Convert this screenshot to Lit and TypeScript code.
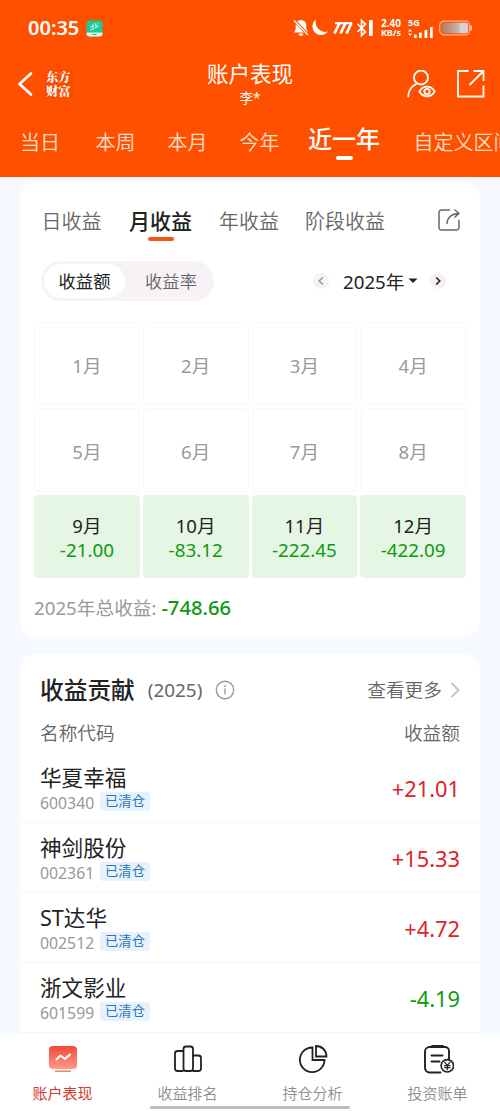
import { LitElement, html, css, svg } from "lit";
import { customElement, property, state } from "lit/decorators.js";

const fontStack = css`"Noto Sans", "Noto Sans CJK SC", sans-serif`;

@customElement("status-bar")
class StatusBar extends LitElement {
  static styles = css`
    :host { display: flex; align-items: center; height: 56px; padding: 0 28px 0 28px; color: #fff; }
    .clock { font-size: 20px; font-weight: 600; line-height: 24px; width: 52px; white-space: nowrap; }
    .app { margin-left: 6px; }
    .signs { margin-left: auto; display: flex; align-items: center; }
    svg { display: block; }
    .rate { width: 24px; margin-left: 5px; font-size: 10px; font-weight: 700; line-height: 9.5px; text-align: center; white-space: nowrap; }
    .rate div:last-child { font-size: 9px; }
    .net { margin-left: 5px; width: 26px; }
    .gen { font-size: 9px; font-weight: 700; line-height: 9px; }
    .batt { margin-left: 5px; }
  `;
  render() {
    return html`
      <span class="clock">00:35</span>
      <svg class="app" width="17" height="17" viewBox="0 0 17 17">
        <rect x=".5" y=".5" width="16" height="16" rx="3" fill="#20c997"/>
        <path d="M.5 12.500h16v1a3 3 0 0 1-3 3h-10a3 3 0 0 1-3-3z" fill="#d9f3e4"/>
        <path d="M4 10c4 0 6-3 8-7M4 7l3-1M6 4l2 1.500M9 8l4-2M6 9l2-4M9 3l1 3" stroke="#b9f5dc" stroke-width="1" fill="none"/>
        <path d="M6.500 14.500h4" stroke="#4aa98c" stroke-width="1"/>
      </svg>
      <div class="signs">
        <svg width="82" height="20" viewBox="0 0 82 20" fill="#fff">
          <path d="M9 2a5.300 5.300 0 0 0-5.300 5.300v4L2 14.500h14l-1.700-3.200v-4A5.300 5.300 0 0 0 9 2zM6.500 15.500h5a2.500 2.500 0 0 1-5 0z"/>
          <path d="M2 2l14 15" stroke="#ff5000" stroke-width="3"/>
          <path d="M2 2.500l14 14.500" stroke="#fff" stroke-width="1.300"/>
          <path d="M24 1.500a8.600 8.600 0 1 0 12 12 9.600 9.600 0 0 1-12-12z"/>
          <g stroke="#fff" stroke-width="2.800" fill="none">
            <path d="M43 5.200h17" stroke-width="2.200"/>
            <path d="M47.500 5L42.500 15.500M53.500 5L48.500 15.500M59.500 5L54.500 15.500"/>
          </g>
          <path d="M65.500 6l8 8-4 3.500v-15l4 3.500-8 8" fill="none" stroke="#fff" stroke-width="1.700"/>
          <rect x="77" y="2" width="3.800" height="16" rx="1"/>
        </svg>
        <div class="rate"><div>2.40</div><div>KB/s</div></div>
        <div class="net">
          <div class="gen">5G</div>
          <svg width="26" height="11" viewBox="0 0 26 11" fill="#fff">
            <path d="M0 4.500l2-2.500 2 2.500zM0 6.500l2 2.500 2-2.500z"/>
            <rect x="6" y="7.500" width="2.800" height="3.500" rx=".6"/>
            <rect x="11" y="5.500" width="2.800" height="5.500" rx=".6"/>
            <rect x="16.500" y="3" width="2.800" height="8" rx=".6"/>
            <rect x="22" y="0" width="2.800" height="11" rx=".6"/>
          </svg>
        </div>
        <svg class="batt" width="33" height="16" viewBox="0 0 33 16">
          <defs><linearGradient id="b"><stop offset="0" stop-color="#b5785c"/><stop offset=".65" stop-color="#c9b3aa"/><stop offset=".7" stop-color="#d7d2d2"/><stop offset="1" stop-color="#d7d2d2"/></linearGradient></defs>
          <rect x=".7" y="1.200" width="30" height="13.600" rx="4" fill="none" stroke="#ffb08a" stroke-width="1.200"/>
          <rect x="2.200" y="2.700" width="27" height="10.600" rx="2.500" fill="url(#b)"/>
          <rect x="31.300" y="5.500" width="1.700" height="5" rx=".8" fill="#ffd0b8"/>
        </svg>
      </div>
    `;
  }
}

@customElement("app-header")
class AppHeader extends LitElement {
  @state() private active = 4;
  private ranges = ["当日", "本周", "本月", "今年", "近一年", "自定义区间"];
  static styles = css`
    :host { display: block; height: 177px; background: #ff5000; color: #fff; overflow: hidden; }
    .bar { display: grid; grid-template-columns: 180px 1fr 180px; height: 56px; align-items: center; }
    .left { display: flex; align-items: center; padding-left: 17px; gap: 12px; }
    .logo { font: 900 12.300px/14px "Noto Serif CJK SC", "Noto Sans CJK SC", sans-serif; width: 26px; background: #f94a02; border-radius: 4px; padding: 0 1px; }
    .title { text-align: center; font-size: 21.500px; line-height: 26px; white-space: nowrap; }
    .owner { text-align: center; font-size: 13.500px; line-height: 22px; height: 20px; }
    .right { display: flex; justify-content: flex-end; gap: 20px; padding-right: 15px; }
    svg { display: block; }
    .ranges { display: grid; grid-template-columns: 75.500px 72px 72px 68.500px 105.500px auto; padding: 2px 0 0 20px; height: 56px; align-items: center; }
    .range { font-size: 20px; line-height: 28px; white-space: nowrap; color: #ffe0cf; font-weight: 350; padding-top: 1px; }
    .on { font-size: 24px; font-weight: 500; color: #fff; width: 72px; padding: 0; }
    .on::after { content: ""; display: block; width: 17px; height: 4px; border-radius: 2px; background: #fff; margin: 3px auto 0; }
  `;
  render() {
    return html`
      <status-bar></status-bar>
      <div class="bar">
        <div class="left">
          <svg width="16" height="26" viewBox="0 0 16 26" fill="none" stroke="#fff" stroke-width="2.600" stroke-linecap="round" stroke-linejoin="round"><path d="M14 2.500L2.500 13 14 23.500"/></svg>
          <div class="logo">东方<br>财富</div>
        </div>
        <div><div class="title">账户表现</div><div class="owner">李*</div></div>
        <div class="right">
          <svg width="29" height="29" viewBox="0 0 29 29" fill="none" stroke="#fff" stroke-width="1.800" stroke-linecap="round">
            <circle cx="14" cy="7.500" r="7"/>
            <path d="M1.200 26.500C1.500 20.500 4.500 16.500 9 14"/>
            <path d="M12.300 21.500c2-3.300 4.500-4.800 7.700-4.800s5.700 1.500 7.700 4.800c-2 3.300-4.500 4.800-7.700 4.800s-5.700-1.500-7.700-4.800z"/>
            <circle cx="20" cy="21.500" r="2.700"/>
          </svg>
          <svg width="29" height="29" viewBox="0 0 29 29" fill="none" stroke="#fff" stroke-width="1.800">
            <path d="M12.500 1H2v25.500h25.500V15.500"/><path d="M17.500 1h10v10M27.500 1L13.500 15"/>
          </svg>
        </div>
      </div>
      <div class="ranges">
        ${this.ranges.map((r, i) => html`<div class="range ${i === this.active ? "on" : ""}" @click=${() => (this.active = i)}>${r}</div>`)}
      </div>
    `;
  }
}

const months: { name: string; value?: string }[] = [
  { name: "1月" }, { name: "2月" }, { name: "3月" }, { name: "4月" },
  { name: "5月" }, { name: "6月" }, { name: "7月" }, { name: "8月" },
  { name: "9月", value: "-21.00" }, { name: "10月", value: "-83.12" },
  { name: "11月", value: "-222.45" }, { name: "12月", value: "-422.09" },
];

@customElement("income-card")
class IncomeCard extends LitElement {
  static styles = css`
    :host { display: block; box-sizing: border-box; height: 455px; background: #fff; border-radius: 16px; padding: 20px 14px 0; }
    svg { display: block; }
    .tabs { display: grid; grid-template-columns: 87.500px 90px 86px 1fr 22px; height: 40px; padding: 0 6px 0 7.500px; align-items: start; }
    .tab { font-size: 20px; line-height: 40px; color: #666; white-space: nowrap; font-weight: 350; }
    .on { font-size: 21px; line-height: 38px; font-weight: 500; color: #222; width: 63px; }
    .on::after { content: ""; display: block; width: 26px; height: 4px; border-radius: 2px; background: #f4570f; margin: -3px auto 0; }
    .share { padding-top: 7px; }
    .tools { display: flex; align-items: center; justify-content: space-between; margin-top: 19px; height: 40px; padding: 0 20px 0 7px; }
    .seg { display: flex; align-items: center; background: #f6f2f6; border-radius: 20px; padding: 3px; height: 34px; width: 167px; }
    .opt { box-sizing: border-box; flex: none; width: 81px; text-align: center; font-size: 17.300px; line-height: 36px; height: 34px; border-radius: 17px; color: #666; font-weight: 350; }
    .opt + .opt { width: 86px; padding-left: 6px; }
    .sel { background: #fff; color: #222; font-weight: 400; }
    .year { display: flex; align-items: center; }
    .label { margin-left: 14px; font-size: 18.700px; line-height: 26px; color: #222; width: 63px; white-space: nowrap; padding-top: 1px; }
    .caret { margin: 0 12px 0 2px; }
    .grid { display: grid; grid-template-columns: repeat(4, 1fr); grid-auto-rows: 83.300px; gap: 3px; margin-top: 21px; }
    .cell { box-sizing: border-box; border: 1px solid #f8f8fa; border-radius: 4px; display: flex; flex-direction: column; align-items: center; justify-content: center; font-size: 18.500px; line-height: 25px; color: #999; padding-top: 3px; }
    .loss { background: #e5f6e5; border-color: #e5f6e5; color: #222; }
    .num { color: #0e9a0e; font-weight: 500; font-size: 18.700px; }
    .cell .num { font-size: 18.800px; font-weight: 450; }
    .total { margin-top: 15px; font-size: 18.700px; line-height: 28px; color: #999; white-space: nowrap; }
    .total .num { font-size: 20.200px; }
  `;
  private arrow(d: string, color: string) {
    return html`<svg width="16" height="16" viewBox="0 0 16 16" fill="none"><circle cx="8" cy="8" r="8" fill="#f7f1f5"/><path d=${d} stroke=${color} stroke-width="1.600"/></svg>`;
  }
  render() {
    return html`
      <div class="tabs">
        <div class="tab">日收益</div><div class="tab on">月收益</div><div class="tab">年收益</div><div class="tab">阶段收益</div>
        <svg class="share" width="22" height="22" viewBox="0 0 22 22" fill="none" stroke="#666" stroke-width="1.500" stroke-linecap="round" stroke-linejoin="round">
          <path d="M11.500 1H3.500A2.500 2.500 0 0 0 1 3.500v15A2.500 2.500 0 0 0 3.500 21h15a2.500 2.500 0 0 0 2.500-2.500V11.500"/>
          <path d="M9 14.500C9.500 8.500 13 4.800 21 4.500M17 1l4 3.500-4 3.500"/>
        </svg>
      </div>
      <div class="tools">
        <div class="seg"><div class="opt sel">收益额</div><div class="opt">收益率</div></div>
        <div class="year">
          ${this.arrow("M9.800 4.500L6.200 8l3.600 3.500", "#999")}
          <span class="label">2025年</span>
          <svg class="caret" width="10" height="6" viewBox="0 0 10 6"><path d="M.5.500h9L5 5z" fill="#222"/></svg>
          ${this.arrow("M6.200 4.500L9.800 8l-3.600 3.500", "#222")}
        </div>
      </div>
      <div class="grid">
        ${months.map((m) => html`<div class="cell ${m.value ? "loss" : ""}"><span>${m.name}</span>${m.value ? html`<span class="num">${m.value}</span>` : ""}</div>`)}
      </div>
      <div class="total">2025年总收益: <span class="num">-748.66</span></div>
    `;
  }
}

const stocks = [
  { name: "华夏幸福", code: "600340", value: "+21.01" },
  { name: "神剑股份", code: "002361", value: "+15.33" },
  { name: "ST达华", code: "002512", value: "+4.72" },
  { name: "浙文影业", code: "601599", value: "-4.19" },
];

@customElement("contribution-card")
class ContributionCard extends LitElement {
  static styles = css`
    :host { display: block; background: #fff; border-radius: 16px 16px 0 0; margin-top: 17px; padding-top: 18px; height: 363px; }
    svg { display: block; }
    .head, .cols, .row { display: flex; align-items: center; padding: 0 20px; }
    .head { height: 36px; color: #666; }
    .title { font-size: 23.700px; font-weight: 500; line-height: 34px; color: #222; }
    .year { font-size: 18.900px; margin: 0 10px 0 13px; line-height: 26px; width: 57px; }
    .more { margin-left: auto; margin-right: 8px; font-size: 18.700px; line-height: 26px; font-weight: 350; }
    .cols { box-sizing: border-box; justify-content: space-between; height: 45px; padding-top: 4px; font-size: 18.700px; line-height: 26px; color: #666; font-weight: 350; }
    .row { box-sizing: border-box; height: 70px; justify-content: space-between; border-bottom: 1.500px solid #f4f5f8; }
    .name { font-size: 21.600px; line-height: 28px; color: #222; }
    .meta { display: flex; align-items: center; height: 19px; }
    .code { font-size: 15.800px; line-height: 19px; color: #999; width: 60px; padding-top: 3px; }
    .tag { font-size: 13.300px; line-height: 19px; height: 19px; width: 50px; text-align: center; background: #e6f2fd; color: #2c77b8; border-radius: 3px; }
    .value { font-size: 21.800px; line-height: 28px; font-weight: 450; color: #e02228; padding-top: 3px; }
    .down { color: #0e9a0e; }
  `;
  render() {
    return html`
      <div class="head">
        <span class="title">收益贡献</span><span class="year">(2025)</span>
        <svg width="20" height="20" viewBox="0 0 20 20" fill="none" stroke="#999" stroke-width="1.400"><circle cx="10" cy="10" r="8.700"/><path d="M10 8.500v6M10 5.300v1.700"/></svg>
        <span class="more">查看更多</span>
        <svg width="10" height="16" viewBox="0 0 10 16" fill="none" stroke="#c4c4c4" stroke-width="2"><path d="M1.500 1l7 7-7 7"/></svg>
      </div>
      <div class="cols"><span>名称代码</span><span>收益额</span></div>
      ${stocks.map((s) => html`
        <div class="row">
          <div><div class="name">${s.name}</div><div class="meta"><span class="code">${s.code}</span><span class="tag">已清仓</span></div></div>
          <span class="value ${s.value.startsWith("-") ? "down" : ""}">${s.value}</span>
        </div>`)}
    `;
  }
}

const navIcons = [
  svg`<defs><linearGradient id="g" x1="0" y1="0" x2="0" y2="1"><stop offset="0" stop-color="#f04a36"/><stop offset="1" stop-color="#ff9a8c"/></linearGradient></defs>
    <rect x="2" y="3" width="28" height="23" rx="4" fill="url(#g)"/><path d="M9.500 16.500l4-4 4.500 3.500 5-4.500" fill="none" stroke="#fff" stroke-width="2" stroke-linecap="round" stroke-linejoin="round"/><path d="M8 28.200h16" stroke="#f5877a" stroke-width="1.600"/>`,
  svg`<g fill="none" stroke="#222" stroke-width="1.800"><path d="M11.500 8H5.500a2.500 2.500 0 0 0-2.500 2.500v15a2.500 2.500 0 0 0 2.500 2.500H11.500M20.500 12.500h6a2.500 2.500 0 0 1 2.500 2.500v10.500a2.500 2.500 0 0 1-2.500 2.500h-6"/><rect x="11.500" y="3.500" width="9.500" height="24.500" rx="2.500"/></g>`,
  svg`<g fill="none" stroke="#222" stroke-width="1.800"><path d="M15.500 4.500A12.300 12.300 0 1 0 27.500 17H15.500z"/><path d="M19 3v10.500h10.500C29.500 7.500 25 3 19 3z"/></g>`,
  svg`<g fill="none" stroke="#222" stroke-width="1.900" stroke-linecap="round"><path d="M18.500 29.500H7.500A4.500 4.500 0 0 1 3 25V8.500A4.500 4.500 0 0 1 7.500 4h15.500a4 4 0 0 1 4 4v8"/><path d="M10 3h11" stroke-width="2"/><path d="M9.500 12.500h11M9.500 18.500h8"/><circle cx="25.300" cy="22.800" r="6.200" fill="#fff" stroke-width="1.600"/><path d="M22.800 19.300l2.500 3 2.500-3M25.300 22.300v4.500M22.600 22.600h5.400M22.600 24.700h5.400" stroke-width="1.200"/></g>`,
];

@customElement("bottom-nav")
class BottomNav extends LitElement {
  @property({ type: Array }) items = ["账户表现", "收益排名", "持仓分析", "投资账单"];
  static styles = css`
    :host { display: block; height: 76px; background: #fff; }
    .items { display: grid; grid-template-columns: repeat(4, 1fr); height: 71px; }
    .item { display: flex; flex-direction: column; align-items: center; padding-top: 8px; box-sizing: border-box; font-size: 15px; font-weight: 350; line-height: 20px; color: #8c8c8c; gap: 8px; }
    .on { color: #d23a2c; font-weight: 400; }
    svg { display: block; }
    .home { width: 200px; height: 3px; border-radius: 2px; background: #bcbcbc; margin: 0 auto; }
  `;
  render() {
    return html`
      <div class="items">${this.items.map((t, i) => html`<div class="item ${i === 0 ? "on" : ""}"><svg width="32" height="32" viewBox="0 0 32 32">${navIcons[i]}</svg><span>${t}</span></div>`)}</div>
      <div class="home"></div>
    `;
  }
}

@customElement("app-root")
class AppRoot extends LitElement {
  static styles = css`
    :host { display: flex; flex-direction: column; height: 1111px; background: #f6f9ff; overflow: hidden; font-family: ${fontStack}; }
    main { flex: 1; min-height: 0; overflow: hidden; padding: 5px 20px 0; }
  `;
  render() {
    return html`<app-header></app-header><main><income-card></income-card><contribution-card></contribution-card></main><bottom-nav></bottom-nav>`;
  }
}
